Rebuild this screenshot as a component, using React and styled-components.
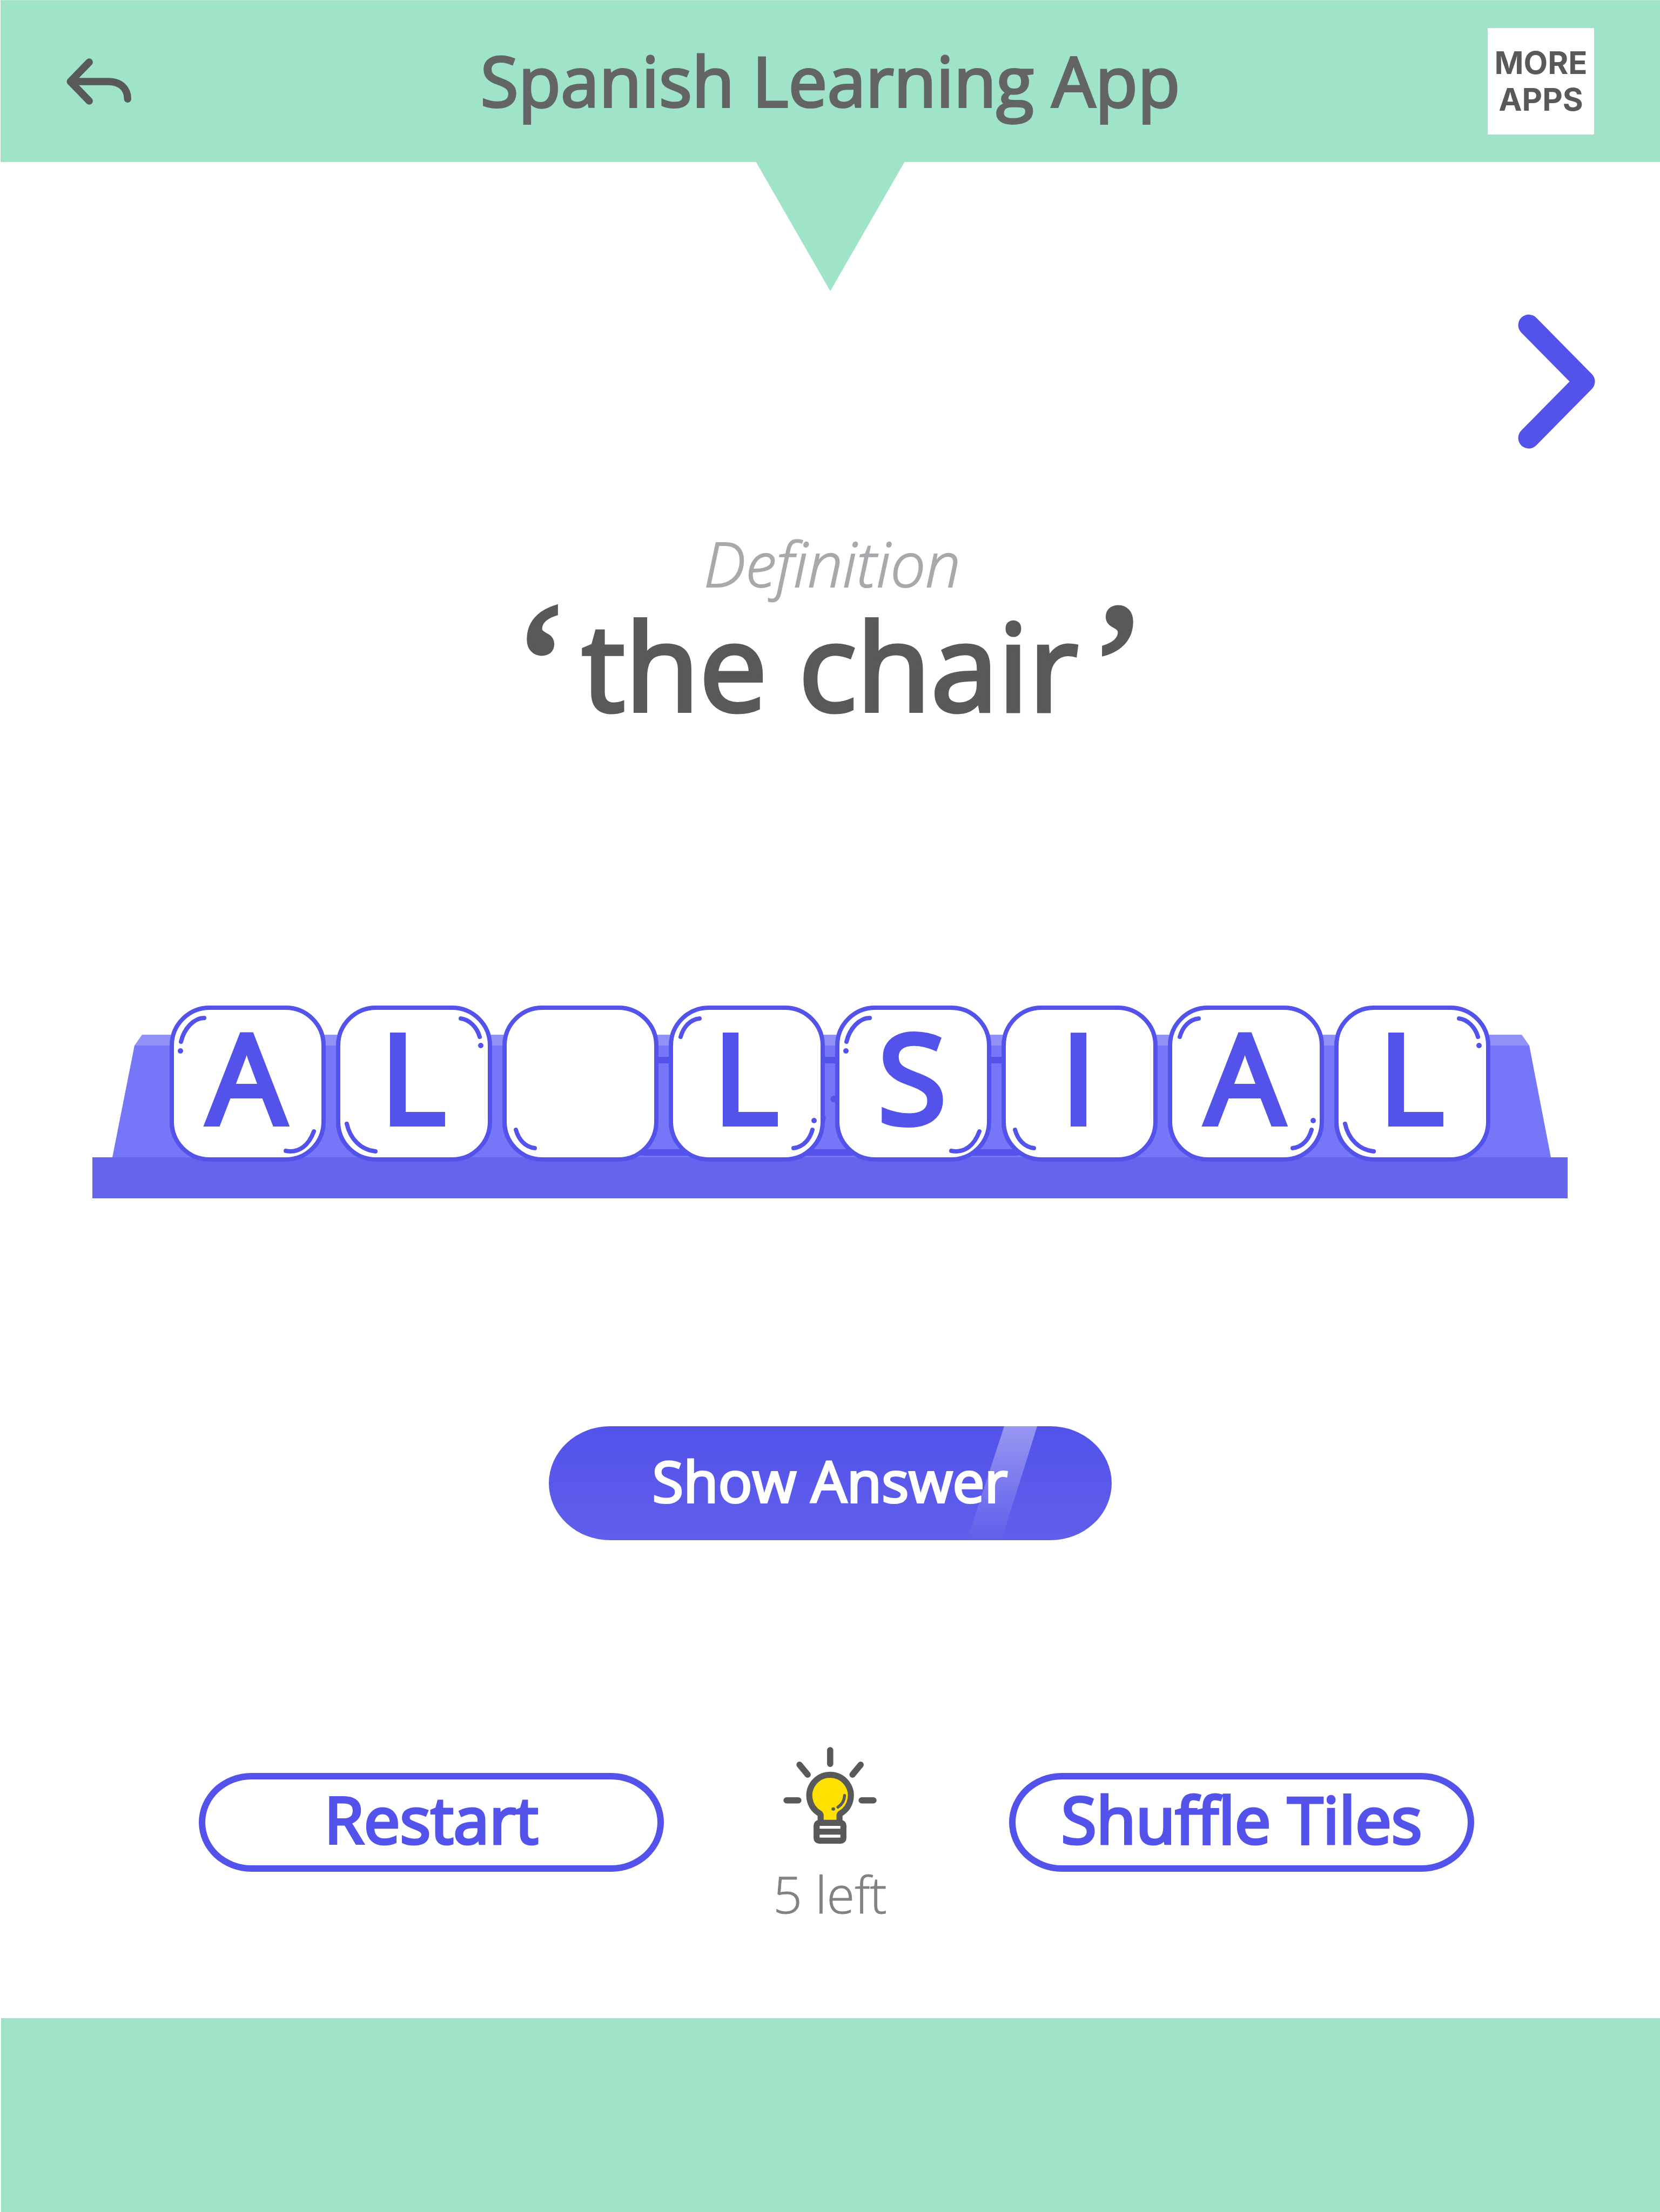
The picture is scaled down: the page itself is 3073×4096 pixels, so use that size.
import React, { useState } from "react";
import styled, { createGlobalStyle, ThemeProvider } from "styled-components";

const theme = {
  mint: "#9fe3c8",
  mintLight: "#b7ead6",
  indigo: "#5352ea",
  rackBase: "#6564ec",
  rackBack: "#7676f9",
  rackTop: "#9291f8",
  ink: "#58595b",
  title: "#636466",
  muted: "#808285",
  faint: "#a7a9ac",
  sun: "#ffe000",
};

const GlobalStyle = createGlobalStyle`
  *, *::before, *::after { box-sizing: border-box; }
  body { margin: 0; background: #fff; }
  button { font: inherit; border: 0; padding: 0; margin: 0; background: none; cursor: pointer; }
  svg { display: block; }
`;

const Page = styled.div`
  display: flex;
  flex-direction: column;
  min-height: 100vh;
  font-family: "Open Sans", "Noto Sans", sans-serif;
  font-weight: 400;
  color: ${({ theme }) => theme.ink};
`;

const Header = styled.header`
  position: relative;
  display: grid;
  grid-template-columns: 1fr auto 1fr;
  align-items: center;
  height: 300px;
  padding: 0 122px;
  background: ${({ theme }) => theme.mint};
  border-top: 1px solid ${({ theme }) => theme.mintLight};
  border-left: 1px solid #fff;
`;

const Pointer = styled.svg`
  position: absolute;
  top: 100%;
  left: 50%;
  width: 276px;
  height: 240px;
  margin-top: -1px;
  transform: translateX(-50%);
  fill: ${({ theme }) => theme.mint};
`;

const Title = styled.h1`
  margin: 0;
  padding-bottom: 4px;
  font-size: 128px;
  font-weight: 400;
  line-height: 160px;
  color: ${({ theme }) => theme.title};
  -webkit-text-stroke: 4px currentColor;
`;

const IconButton = styled.button`
  justify-self: start;
  color: ${({ theme }) => theme.ink};
`;

const MoreApps = styled.button`
  justify-self: end;
  display: flex;
  flex-direction: column;
  align-items: center;
  justify-content: center;
  width: 197px;
  height: 197px;
  padding-bottom: 2px;
  background: #fff;
  color: ${({ theme }) => theme.ink};
  font-family: Inter, "Open Sans", sans-serif;
  font-size: 58px;
  font-weight: 700;
  line-height: 68px;
`;

const Main = styled.main`
  display: flex;
  flex-direction: column;
  align-items: center;
  padding: 282px 120px 181px;
`;

const NextButton = styled.button`
  align-self: flex-end;
  color: ${({ theme }) => theme.indigo};
`;

const Clue = styled.section`
  display: flex;
  flex-direction: column;
  align-items: center;
  gap: 8px;
  margin-top: 152px;
`;

const ClueLabel = styled.p`
  margin: 0;
  padding-left: 8px;
  font-size: 115px;
  font-style: italic;
  font-weight: 300;
  line-height: 120px;
  color: ${({ theme }) => theme.faint};
  -webkit-text-stroke: 2px currentColor;
`;

const ClueText = styled.h2`
  display: flex;
  align-items: flex-start;
  gap: 18px;
  margin: 0;
  font-size: 224px;
  font-weight: 400;
  line-height: 240px;
  -webkit-text-stroke: 7px currentColor;
`;

const Quote = styled.span`
  padding-top: 10px;
  font-family: "Liberation Serif", serif;
  font-size: 340px;
  line-height: 230px;
`;

const Rack = styled.section`
  display: grid;
  justify-items: center;
  width: calc(100% - 102px);
  margin-top: 511px;
`;

const RackShape = styled.svg`
  grid-area: 1 / 1;
  width: 100%;
  height: 357px;
`;

const TileRow = styled.div`
  grid-area: 1 / 1;
  display: flex;
  justify-content: center;
  align-items: flex-start;
  gap: 19px;
`;

const TileButton = styled.button`
  position: relative;
  display: flex;
  align-items: center;
  justify-content: center;
  width: 289px;
  height: 289px;
  padding: 0 4px 30px 0;
  border: 8px solid ${({ theme }) => theme.indigo};
  border-radius: 74px;
  background: #fff;
  color: ${({ theme }) => theme.indigo};
  font-size: 230px;
  font-weight: 400;
  line-height: 240px;
  -webkit-text-stroke: 10px currentColor;
`;

const Gloss = styled.svg`
  position: absolute;
  inset: -8px;
  width: 289px;
  height: 289px;
`;

const AnswerButton = styled.button`
  position: relative;
  overflow: hidden;
  width: 1042px;
  height: 211px;
  margin-top: 422px;
  padding-bottom: 10px;
  border-radius: 114px / 106px;
  background: linear-gradient(${({ theme }) => theme.indigo}, #605fec);
  color: #fff;
  font-size: 105px;
  font-weight: 400;
  line-height: 140px;
  -webkit-text-stroke: 4px currentColor;
`;

const Shine = styled.svg`
  position: absolute;
  inset: 0;
  width: 100%;
  height: 100%;
`;

const AnswerLabel = styled.span`
  position: relative;
`;

const Actions = styled.div`
  display: grid;
  grid-template-columns: minmax(0, 861px) 639px minmax(0, 861px);
  justify-content: center;
  align-items: start;
  margin-top: 383px;
  padding-left: 24px;
`;

const OutlineButton = styled.button`
  height: 183px;
  margin-top: 48px;
  padding-bottom: 14px;
  border: 12px solid ${({ theme }) => theme.indigo};
  border-radius: 98px / 92px;
  color: ${({ theme }) => theme.indigo};
  font-size: 119px;
  font-weight: 400;
  line-height: 140px;
  -webkit-text-stroke: 5px currentColor;
`;

const HintButton = styled.button`
  display: flex;
  flex-direction: column;
  align-items: center;
  gap: 44px;
  padding-right: 24px;
  color: ${({ theme }) => theme.muted};
  font-size: 94px;
  font-weight: 300;
  line-height: 98px;
  -webkit-text-stroke: 1px currentColor;
`;

const Footer = styled.footer`
  flex: 1;
  min-height: 120px;
  border-left: 2px solid #fff;
  background: ${({ theme }) => theme.mint};
`;

/* Corner highlights: each arc follows the rounded corner of a tile. */
const glossKinds = {
  a: {
    arcs: ["M64 23C45 23 27 42 21 67", "M267 233C258 258 240 274 215 269"],
    dot: [20, 84],
  },
  b: {
    arcs: ["M231 24C247 26 261 40 266 58", "M20 219C26 246 45 267 73 270"],
    dot: [268, 74],
  },
  c: { arcs: ["M25 230C30 248 42 262 60 264"] },
  d: {
    arcs: ["M57 24C39 26 27 40 22 58", "M266 230C261 248 249 262 231 264"],
    dot: [269, 213],
  },
};

const startTiles = [
  { id: 1, letter: "A", gloss: "a" },
  { id: 2, letter: "L", gloss: "b" },
  { id: 3, letter: "", gloss: "c" },
  { id: 4, letter: "L", gloss: "d" },
  { id: 5, letter: "S", gloss: "a" },
  { id: 6, letter: "I", gloss: "c" },
  { id: 7, letter: "A", gloss: "d" },
  { id: 8, letter: "L", gloss: "b" },
];

function Tile({ letter, gloss }) {
  const { arcs, dot } = glossKinds[gloss];
  return (
    <TileButton type="button" aria-label={letter || "Blank tile"}>
      {letter}
      <Gloss viewBox="0 0 289 289" fill="none" stroke={theme.indigo} strokeWidth="8" strokeLinecap="round" aria-hidden="true">
        {arcs.map((d) => (
          <path key={d} d={d} />
        ))}
        {dot && <circle cx={dot[0]} cy={dot[1]} r="5" fill={theme.indigo} stroke="none" />}
      </Gloss>
    </TileButton>
  );
}

function BackIcon() {
  return (
    <svg width="120" height="86" viewBox="128 112 125 89" fill="none" stroke="currentColor" strokeWidth="14" strokeLinecap="round" strokeLinejoin="round" aria-hidden="true">
      <path d="M172 119L135.500 156.500L172 194M138 156.500H209C234 156.500 246 172 246 190" />
    </svg>
  );
}

function ChevronIcon() {
  return (
    <svg width="143" height="249" viewBox="0 0 143 249" fill="none" stroke="currentColor" strokeWidth="39" strokeLinecap="round" strokeLinejoin="round" aria-hidden="true">
      <path d="M20 20L123 124.500L20 229" />
    </svg>
  );
}

function BulbIcon() {
  return (
    <svg width="173" height="179" viewBox="330 90 540 558" fill="none" stroke={theme.ink} strokeWidth="36" strokeLinecap="round" strokeLinejoin="round" aria-hidden="true">
      <path d="M601 108V187M424 192L471 249M777 192L730 249M349 398H417M783 398H851" />
      <path
        d="M546 528V486Q546 478 539 473A120 120 0 1 1 662 473Q655 478 655 486V528Z"
        fill={theme.sun}
        strokeWidth="35"
      />
      <rect x="505" y="511" width="190" height="137" rx="32" fill={theme.ink} stroke="none" />
      <path d="M540 545H660V562H540ZM540 596H660V613H540Z" fill="#fff" stroke="none" />
      <path d="M684 370Q683 412 646 437" strokeWidth="17" />
      <path d="M618 448H620" strokeWidth="19" />
    </svg>
  );
}

function RackDrawing() {
  return (
    <RackShape viewBox="0 0 2732 357" preserveAspectRatio="none" aria-hidden="true">
      <path d="M92 54H2647L2661 74H78Z" fill={theme.rackTop} />
      <path d="M78 74H2661L2701 281H37Z" fill={theme.rackBack} />
      <rect x="941" y="101" width="849" height="171" rx="85" fill="none" stroke={theme.indigo} strokeWidth="12" />
      <circle cx="1373" cy="173" r="6" fill={theme.indigo} />
      <ellipse cx="1353" cy="209" rx="5" ry="9" fill={theme.indigo} />
      <path d="M0 281H2732V357H0Z" fill={theme.rackBase} />
    </RackShape>
  );
}

export default function App() {
  const [tiles, setTiles] = useState(startTiles);
  const shuffle = () => setTiles((now) => [...now].sort(() => Math.random() - 0.5));

  return (
    <ThemeProvider theme={theme}>
      <GlobalStyle />
      <Page>
        <Header>
          <IconButton type="button" aria-label="Back">
            <BackIcon />
          </IconButton>
          <Title>Spanish Learning App</Title>
          <MoreApps type="button">
            <span>MORE</span>
            <span>APPS</span>
          </MoreApps>
          <Pointer viewBox="0 0 276 240" aria-hidden="true">
            <path d="M0 0H276L138 240Z" />
          </Pointer>
        </Header>

        <Main>
          <NextButton type="button" aria-label="Next word">
            <ChevronIcon />
          </NextButton>

          <Clue>
            <ClueLabel>Definition</ClueLabel>
            <ClueText>
              <Quote>‘</Quote>
              <span>the chair</span>
              <Quote>’</Quote>
            </ClueText>
          </Clue>

          <Rack aria-label="Letter tiles">
            <RackDrawing />
            <TileRow>
              {tiles.map((tile) => (
                <Tile key={tile.id} letter={tile.letter} gloss={tile.gloss} />
              ))}
            </TileRow>
          </Rack>

          <AnswerButton type="button">
            <Shine viewBox="0 0 1042 211" aria-hidden="true">
              <defs>
                <linearGradient id="shine" x1="0" y1="0" x2="0" y2="1">
                  <stop offset="0" stopColor="#fff" stopOpacity="0.4" />
                  <stop offset="1" stopColor="#fff" stopOpacity="0" />
                </linearGradient>
              </defs>
              <path d="M843 0H904L838 211H774Z" fill="url(#shine)" />
            </Shine>
            <AnswerLabel>Show Answer</AnswerLabel>
          </AnswerButton>

          <Actions>
            <OutlineButton type="button" onClick={() => setTiles(startTiles)}>
              Restart
            </OutlineButton>
            <HintButton type="button">
              <BulbIcon />
              <span>5 left</span>
            </HintButton>
            <OutlineButton type="button" onClick={shuffle}>
              Shuffle Tiles
            </OutlineButton>
          </Actions>
        </Main>

        <Footer />
      </Page>
    </ThemeProvider>
  );
}
